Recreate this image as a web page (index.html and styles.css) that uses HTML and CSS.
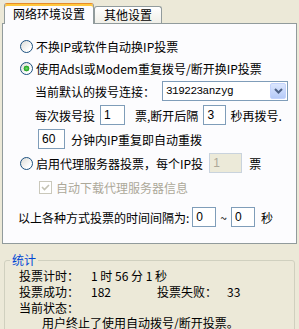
FILE: index.html
```html
<!DOCTYPE html>
<html lang="zh-CN">
<head>
    <meta charset="UTF-8">
    <title>投票设置</title>
    <link rel="stylesheet" href="styles.css">
</head>
<body>

    <div class="tabs">
        <div class="tab active">网络环境设置</div>
        <div class="tab">其他设置</div>
    </div>

    <div class="panel">
        <div class="row tight">
            <span class="radio"></span>不换IP或软件自动换IP投票
        </div>
        <div class="row tight">
            <span class="radio checked"></span>使用Adsl或Modem重复拨号/断开换IP投票
        </div>
        <div class="row sub">
            当前默认的拨号连接：
            <div class="combo">
                <span class="combo-text">319223anzyg</span>
                <span class="combo-btn">
                    <svg width="9" height="6" viewBox="0 0 9 6"><path d="M1 1 L4.5 4.5 L8 1" fill="none" stroke="#4d6185" stroke-width="2"/></svg>
                </span>
            </div>
        </div>
        <div class="row sub">
            每次拨号投<input class="num n1" value="1"><span class="after-n1">票,</span>断开后隔<input class="num n2" value="3"><span class="after-n2">秒再拨号.</span>
        </div>
        <div class="row sub">
            <input class="num n60" value="60"><span class="after-n60">分钟内IP重复即自动重拨</span>
        </div>
        <div class="row">
            <span class="radio"></span>启用代理服务器投票，每个IP投<input class="num off" value="1" disabled><span class="after-off">票</span>
        </div>
        <div class="row check-row">
            <span class="check">
                <svg width="11" height="11" viewBox="0 0 11 11"><path d="M2 5 L4.5 7.5 L9 3" fill="none" stroke="#c4c2b4" stroke-width="1.6"/></svg>
            </span>
            <span class="muted">自动下载代理服务器信息</span>
        </div>
        <div class="row interval">
            以上各种方式投票的时间间隔为:<input class="num n0" value="0"><span class="tilde">~</span><input class="num n0b" value="0"><span class="after-n0">秒</span>
        </div>
    </div>

    <fieldset class="stats">
        <legend>统计</legend>
        <div class="stat-row">
            <span class="k">投票计时：</span><span>1 时 56 分 1 秒</span>
        </div>
        <div class="stat-row">
            <span class="k">投票成功：</span><span class="v">182</span><span class="k2">投票失败：</span><span>33</span>
        </div>
        <div class="stat-row">
            <span class="k">当前状态：</span>
        </div>
        <div class="stat-row status">用户终止了使用自动拨号/断开投票。</div>
    </fieldset>

</body>
</html>
```

FILE: styles.css
```css
:root {
    --bg: #ece9d8;
    --tab-border: #919b9c;
    --input-border: #7f9db9;
    --group-border: #d0d0bf;
    --title-blue: #0046d5;
}

body {
    margin: 0;
    width: 299px;
    height: 329px;
    overflow: hidden;
    background: var(--bg);
    color: #000;
    font-family: "Noto Sans CJK SC", "Liberation Sans", sans-serif;
    font-size: 12px;
}

/* Tabs */
.tabs {
    display: flex;
    align-items: flex-end;
    height: 23px;
    padding-left: 4px;
}

.tab {
    box-sizing: border-box;
    height: 17px;
    padding: 0 9px;
    line-height: 16px;
    border: 1px solid var(--tab-border);
    border-bottom: none;
    border-radius: 3px 3px 0 0;
    background: linear-gradient(#ffffff, #f0efe8);
}

.tab.active {
    position: relative;
    z-index: 1;
    height: 21px;
    margin-bottom: -1px;
    padding: 0 8px;
    line-height: 19px;
    border-top: 1px solid #e68b2c;
    box-shadow: inset 0 2px 0 #ffc83c;
    background: #fcfcfe;
}

/* Panel */
.panel {
    margin: 0 2px;
    padding: 11px 0 14px 17px;
    border: 1px solid var(--tab-border);
    background: #fcfcfe;
}

.row {
    display: flex;
    align-items: center;
    height: 24px;
    white-space: nowrap;
}

.row.tight {
    height: 22px;
}

.row.sub {
    padding-left: 15px;
}

.radio {
    box-sizing: border-box;
    width: 13px;
    height: 13px;
    margin-right: 3px;
    border: 1px solid #1c5180;
    border-radius: 50%;
    background: linear-gradient(135deg, #dcdcd7, #ffffff 75%);
}

.radio.checked {
    background:
        radial-gradient(circle, #6fdc6b 0, #21a121 2.6px, transparent 3.2px),
        linear-gradient(135deg, #dcdcd7, #ffffff 75%);
}

.check {
    box-sizing: border-box;
    width: 13px;
    height: 13px;
    margin-right: 4px;
    border: 1px solid #cac8bb;
    background: #fff;
    display: flex;
    align-items: center;
    justify-content: center;
}

.check-row {
    padding-left: 19px;
}

.muted {
    color: #aca899;
}

/* Combo box */
.combo {
    box-sizing: border-box;
    display: flex;
    align-items: center;
    width: 126px;
    height: 20px;
    margin-left: 7px;
    border: 1px solid var(--input-border);
    background: #fff;
}

.combo-text {
    padding-left: 3px;
    font-family: "Liberation Mono", monospace;
    font-size: 11px;
    letter-spacing: -0.5px;
}

.combo-btn {
    box-sizing: border-box;
    width: 16px;
    height: 16px;
    margin: 0 1px 0 auto;
    border: 1px solid #c3d3fd;
    border-radius: 2px;
    background: linear-gradient(#dbe6fe, #b6cbf8);
    display: flex;
    align-items: center;
    justify-content: center;
}

/* Number inputs */
.num {
    box-sizing: border-box;
    height: 20px;
    padding: 0 0 0 3px;
    border: 1px solid var(--input-border);
    background: #fff;
    color: #000;
    font-family: "Liberation Sans", sans-serif;
    font-size: 12px;
    outline: none;
}

.n1 { width: 25px; margin: 0 0 0 5px; }
.after-n1 { margin-left: 10px; }
.n2 { width: 23px; margin-left: 5px; }
.after-n2 { margin-left: 4px; }

.n60 { width: 27px; margin-left: 3px; }
.after-n60 { margin-left: 6px; }

.off {
    width: 33px;
    margin-left: 6px;
    border-color: #c9d3dd;
    background: #ecead9;
    color: #aca899;
}
.after-off { margin-left: 7px; }

.interval {
    margin-top: 6px;
    margin-left: -2px;
}

.n0, .n0b { width: 24px; margin-left: 3px; }
.tilde { margin-left: 4px; }
.n0b { margin-left: 4px; }
.after-n0 { margin-left: 6px; }

/* Statistics group */
.stats {
    margin: 9px 4px 0;
    padding: 0 0 20px 14px;
    border: 1px solid var(--group-border);
    border-radius: 3px;
}

.stats legend {
    margin-left: -9px;
    padding: 0 2px 2px;
    line-height: 13px;
    color: var(--title-blue);
}

.stat-row {
    display: flex;
    line-height: 16px;
    white-space: nowrap;
}

.stat-row .k { width: 72px; }
.stat-row .v { width: 66px; }
.stat-row .k2 { width: 70px; }

.stat-row.status {
    padding-left: 23px;
    line-height: 14px;
}
```
